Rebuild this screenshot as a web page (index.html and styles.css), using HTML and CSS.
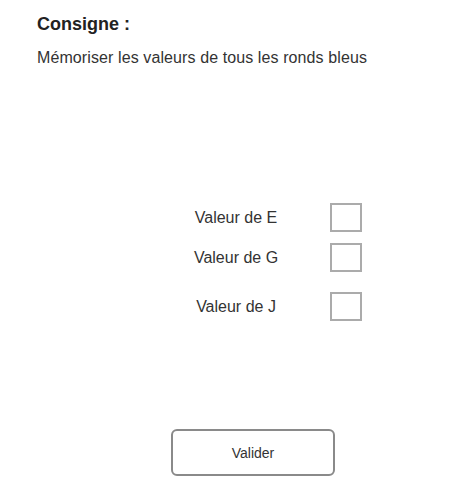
FILE: index.html
```html
<!DOCTYPE html>
<html lang="fr">
<head>
<meta charset="utf-8">
<title>Consigne</title>
<link rel="stylesheet" href="styles.css">
</head>
<body>
<main class="page">
  <h1 class="title">Consigne :</h1>
  <p class="instruction">Mémoriser les valeurs de tous les ronds bleus</p>
  <form class="answers">
    <div class="row">
      <label class="label" for="e">Valeur de E</label>
      <input class="box" id="e" type="text">
    </div>
    <div class="row row-g">
      <label class="label" for="g">Valeur de G</label>
      <input class="box" id="g" type="text">
    </div>
    <div class="row row-j">
      <label class="label" for="j">Valeur de J</label>
      <input class="box" id="j" type="text">
    </div>
    <button class="submit" type="button">Valider</button>
  </form>
</main>
</body>
</html>
```
FILE: styles.css
```css
html, body {
  margin: 0;
  padding: 0;
  background: #ffffff;
}
body {
  font-family: "Liberation Sans", Arial, sans-serif;
  color: #2a2a2a;
}
.page {
  padding: 14px 0 0 37px;
}
.title {
  margin: 0;
  font-size: 18px;
  line-height: 20px;
  font-weight: bold;
  color: #222222;
}
.instruction {
  margin: 15px 0 0 0;
  font-size: 16px;
  line-height: 18px;
  color: #333333;
  letter-spacing: 0.1px;
}
.answers {
  margin: 136px 0 0 0;
  display: flex;
  flex-direction: column;
}
.row {
  display: flex;
  align-items: center;
  height: 29px;
  padding-left: 139px;
}
.row-g {
  margin-top: 11px;
}
.row-j {
  margin-top: 20px;
}
.label {
  width: 120px;
  text-align: center;
  font-size: 16px;
  line-height: 29px;
  color: #333333;
}
.box {
  margin: 0 0 0 34px;
  box-sizing: border-box;
  width: 32px;
  height: 29px;
  border: 2px solid #ababab;
  background: #ffffff;
  padding: 0;
  outline: none;
}
.submit {
  margin: 108px 0 0 134px;
  box-sizing: border-box;
  width: 164px;
  height: 47px;
  border: 2px solid #8a8a8a;
  border-radius: 6px;
  background: #ffffff;
  font-family: "Liberation Sans", Arial, sans-serif;
  font-size: 14px;
  color: #333333;
  padding: 0;
  align-self: flex-start;
}
```
